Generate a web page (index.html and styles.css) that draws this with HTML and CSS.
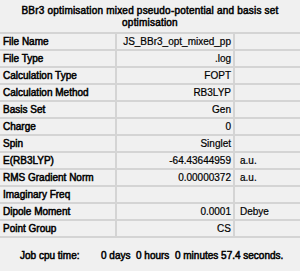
FILE: index.html
```html
<!DOCTYPE html>
<html>
<head>
<meta charset="utf-8">
<link rel="stylesheet" href="styles.css">
</head>
<body>
<div class="panel">
  <div class="title">BBr3 optimisation mixed pseudo-potential and basis set<br>optimisation</div>
  <div class="grid">
    <div class="lbl">File Name</div><div class="val">JS_BBr3_opt_mixed_pp</div><div class="unit"></div>
    <div class="lbl">File Type</div><div class="val">.log</div><div class="unit"></div>
    <div class="lbl">Calculation Type</div><div class="val">FOPT</div><div class="unit"></div>
    <div class="lbl">Calculation Method</div><div class="val">RB3LYP</div><div class="unit"></div>
    <div class="lbl">Basis Set</div><div class="val">Gen</div><div class="unit"></div>
    <div class="lbl">Charge</div><div class="val">0</div><div class="unit"></div>
    <div class="lbl">Spin</div><div class="val">Singlet</div><div class="unit"></div>
    <div class="lbl">E(RB3LYP)</div><div class="val">-64.43644959</div><div class="unit">a.u.</div>
    <div class="lbl">RMS Gradient Norm</div><div class="val">0.00000372</div><div class="unit">a.u.</div>
    <div class="lbl">Imaginary Freq</div><div class="val"></div><div class="unit"></div>
    <div class="lbl">Dipole Moment</div><div class="val">0.0001</div><div class="unit">Debye</div>
    <div class="lbl">Point Group</div><div class="val">CS</div><div class="unit"></div>
  </div>
  <div class="footer"><span class="flabel">Job cpu time:</span><span class="ftime">0 days&nbsp; 0 hours&nbsp; 0 minutes 57.4 seconds.</span></div>
</div>
</body>
</html>
```
FILE: styles.css
```css
html, body {
  margin: 0;
  padding: 0;
  background: #f0f0f0;
}
.panel {
  width: 300px;
  height: 271px;
  font-family: "Liberation Sans", Arial, sans-serif;
  font-size: 10px;
  color: #000;
  -webkit-text-stroke: 0.2px #000;
}
.title {
  text-align: center;
  line-height: 12px;
  padding-top: 5px;
  height: 27px;
  letter-spacing: 0.2px;
  -webkit-text-stroke: 0.5px #000;
}
.grid {
  display: grid;
  grid-template-columns: 117px 118px 1fr;
  border-top: 2px solid #d4d4d4;
}
.grid > div {
  height: 15px;
  line-height: 15px;
  border-bottom: 2px solid #d4d4d4;
  white-space: nowrap;
  overflow: hidden;
}
.lbl {
  padding-left: 3px;
  border-right: 2px solid #d4d4d4;
  -webkit-text-stroke: 0.5px #000;
}
.val {
  text-align: right;
  padding-right: 2px;
  border-right: 2px solid #d4d4d4;
}
.unit {
  padding-left: 5px;
}
.footer {
  padding-top: 12px;
  line-height: 12px;
  -webkit-text-stroke: 0.5px #000;
  white-space: nowrap;
}
.flabel {
  display: inline-block;
  margin-left: 20px;
  width: 81px;
}
```
